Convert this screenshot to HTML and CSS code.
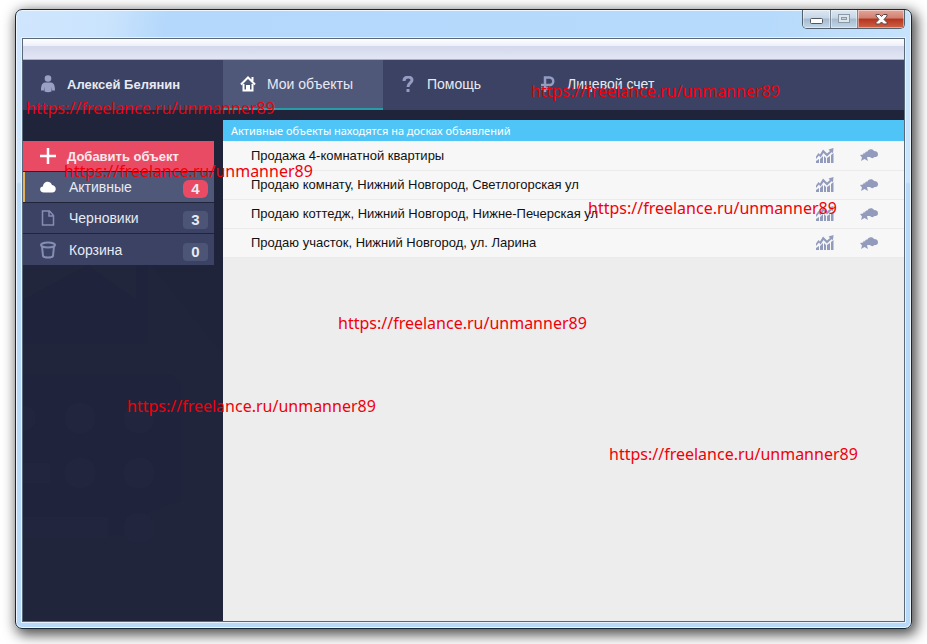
FILE: index.html
```html
<!DOCTYPE html>
<html lang="ru">
<head>
<meta charset="utf-8">
<title>Мои объекты</title>
<link rel="stylesheet" href="styles.css">
</head>
<body>
<svg class="defs" aria-hidden="true">
  <symbol id="chart" viewBox="0 0 18 15">
    <path d="M0 8.500L2.500 5 4 6.500 7 1.500 11 5.500 14 3 12.500 1.500 17.500 0 17 5 15.500 4.200 11 8.500 7.500 5 4.500 9.500 3 7.500 0 11z"/>
    <path d="M0 13l3-2v4H0zM4 11l3-3v7H4zM8 8l2 2v5H8zM11 10l3-2v7h-3zM15 7l2.500-2v10H15z"/>
  </symbol>
  <symbol id="cloudstar" viewBox="0 0 18 12">
    <path d="M5 5c0-2 1-2.500 2.500-2.500C8.500-.5 13-.5 14 2c3 0 4 1.500 4 3.500S16.500 8 14.500 8c-1 1.500-3.500 1.500-4.500 0H6z"/>
    <path d="M4 3.500l1.500 2L9 6 7 8.500 8 12 4.500 10 1 12l1-3.500L0 6l3-.5z"/>
  </symbol>
</svg>
<div class="window">
  <header class="titlebar">
    <div class="controls">
      <button class="ctl ctl-min" aria-label="Свернуть"><svg width="13" height="6"><rect x=".5" y=".5" width="12" height="5" rx="1" fill="#fff" stroke="#505861"/></svg></button>
      <button class="ctl ctl-max" aria-label="Развернуть"><svg width="12" height="10"><rect x=".5" y=".5" width="11" height="8" fill="#dce6ef" stroke="#8c9aa8"/><rect x="3.500" y="3.500" width="5" height="2" fill="#c6d3df" stroke="#8c9aa8"/></svg></button>
      <button class="ctl ctl-close" aria-label="Закрыть"><svg width="13" height="11" viewBox="0 0 13 11"><path d="M1 .5h3.500l2 2 2-2H12v1.500L9 5.500l3 3V10H8.500l-2-2-2 2H1V8.500l3-3-3-3.500z" fill="#fff" stroke="#5d4848"/></svg></button>
    </div>
  </header>
  <div class="client">
    <div class="toolbar"></div>
    <nav class="nav">
      <a class="user" href="#"><svg width="16" height="18" viewBox="0 0 16 18" fill="#99a0c4"><circle cx="8" cy="3.500" r="3.300"/><path d="M5 7.500h6c3 .5 4 3 4 8h-3l-.5-4v5c-2 1-5 1-7 0v-5l-.5 4H1c0-5 1-7.500 4-8z"/></svg>Алексей Белянин</a>
      <a class="tab active" href="#"><svg width="16" height="16" viewBox="0 0 16 16"><path d="M1 8.500l7-7 7 7M12.500 1v4" fill="none" stroke="#fff" stroke-width="2"/><path d="M3.500 8v6.500h9V8" fill="none" stroke="#fff" stroke-width="2"/><path d="M6 9h4v6H6z" fill="#fff"/></svg>Мои объекты</a>
      <a class="tab help" href="#"><svg width="16" height="16" viewBox="0 0 16 16"><path d="M4 5c0-5 8-5 8-1 0 3-4 3-4 7M8 13v3" fill="none" stroke="#949cc2" stroke-width="3"/></svg>Помощь</a>
      <a class="tab" href="#"><svg width="16" height="16" viewBox="0 0 16 16"><path d="M5 16V1.500h4.500c5 0 5 7.500 0 7.500H1M1 12.500h8" fill="none" stroke="#949cc2" stroke-width="2.500"/></svg>Лицевой счет</a>
    </nav>
    <div class="main">
      <aside class="sidebar">
        <svg class="pattern" width="200" height="360" viewBox="0 0 200 360" aria-hidden="true">
          <path d="M125 0l75 95v265H0V84h125z" fill="#20253c"/>
          <path d="M0 84V40L65 3l48 37V0h12v84z" fill="#1f233b"/>
          <path d="M0 40V0h113v40L65 5z" fill="#21263d"/>
          <path d="M0 115h145c9 0 13 6 13 14v112c-25 8-44 10-50 34H0z" fill="#1f233b"/>
          <g fill="#21263e"><circle cx="0" cy="158" r="13"/><rect x="42" y="143" width="30" height="30" rx="12"/><rect x="101" y="143" width="30" height="30" rx="12"/><rect x="0" y="203" width="27" height="20"/><rect x="42" y="198" width="30" height="30" rx="12"/><rect x="101" y="198" width="30" height="30" rx="12"/><rect x="0" y="257" width="85" height="21"/><rect x="101" y="253" width="30" height="30" rx="12"/></g>
        </svg>
        <button class="add"><svg width="16" height="16"><path d="M8 0v16M0 8h16" stroke="#fff" stroke-width="2.500"/></svg>Добавить объект</button>
        <a class="item current" href="#"><svg width="16" height="16" viewBox="0 0 16 16"><path d="M4 13.500c-5 0-5-6-1-6 0-5 7-7 9-1.500 5 .5 5 7.500 0 7.500z" fill="#fff"/></svg>Активные<span class="badge hot">4</span></a>
        <a class="item" href="#"><svg width="16" height="16" viewBox="0 0 16 16" fill="none" stroke="#858db4" stroke-width="1.500"><path d="M2.500 1h7l4 4.500v9.500h-11zM9 1v5h4.500"/></svg>Черновики<span class="badge">3</span></a>
        <a class="item" href="#"><svg width="16" height="18" viewBox="0 0 16 18" fill="none" stroke="#858db4" stroke-width="2"><ellipse cx="8" cy="4" rx="7" ry="2.500"/><path d="M2 5l1 10c1 2 9 2 10 0l1-10"/></svg>Корзина<span class="badge">0</span></a>
      </aside>
      <main class="content">
        <h1 class="caption">Активные объекты находятся на досках объявлений</h1>
        <table class="list">
          <tr><td>Продажа 4-комнатной квартиры</td><td class="act"><svg width="18" height="15"><use href="#chart"/></svg></td><td class="act"><svg width="18" height="12"><use href="#cloudstar"/></svg></td></tr>
          <tr><td>Продаю комнату, Нижний Новгород, Светлогорская ул</td><td class="act"><svg width="18" height="15"><use href="#chart"/></svg></td><td class="act"><svg width="18" height="12"><use href="#cloudstar"/></svg></td></tr>
          <tr><td>Продаю коттедж, Нижний Новгород, Нижне-Печерская ул</td><td class="act"><svg width="18" height="15"><use href="#chart"/></svg></td><td class="act"><svg width="18" height="12"><use href="#cloudstar"/></svg></td></tr>
          <tr><td>Продаю участок, Нижний Новгород, ул. Ларина</td><td class="act"><svg width="18" height="15"><use href="#chart"/></svg></td><td class="act"><svg width="18" height="12"><use href="#cloudstar"/></svg></td></tr>
        </table>
      </main>
    </div>
  </div>
</div>
<span class="mark m1">https://freelance.ru/unmanner89</span>
<span class="mark m2">https://freelance.ru/unmanner89</span>
<span class="mark m3">https://freelance.ru/unmanner89</span>
<span class="mark m4">https://freelance.ru/unmanner89</span>
<span class="mark m5">https://freelance.ru/unmanner89</span>
<span class="mark m6">https://freelance.ru/unmanner89</span>
<span class="mark m7">https://freelance.ru/unmanner89</span>
</body>
</html>
```
FILE: styles.css
```css
* { box-sizing: border-box; }
body {
  margin: 0;
  padding: 9px 15px 15px;
  min-height: 100vh;
  display: flex;
  position: relative;
  overflow: hidden;
  background: #fff;
  font-family: "Liberation Sans", Arial, sans-serif;
  font-size: 14px;
}
a { color: inherit; text-decoration: none; }
button { font: inherit; border: 0; padding: 0; }
svg { display: block; flex: none; }
.defs { position: absolute; width: 0; height: 0; }

.window {
  flex: 1;
  display: flex;
  flex-direction: column;
  padding: 0 6px 6px;
  border: 1px solid #1b2733;
  border-radius: 7px;
  background: linear-gradient(#d2e8fd00 172px, #b9d9f8 174px), linear-gradient(100deg, #cfe6fd 0, #cbe4fd 90px, #b4d8fb 150px, #b6dafb 75%, #d3e9fe 100%);
  box-shadow: inset 0 0 0 1px #eef7ff, 3px 4px 13px 2px #000000b0;
}
.titlebar { height: 28px; display: flex; justify-content: flex-end; }
.controls {
  display: flex;
  height: 19px;
  border: 1px solid #53606e;
  border-top: 0;
  border-radius: 0 0 5px 5px;
  overflow: hidden;
}
.ctl {
  width: 28px;
  display: flex;
  align-items: center;
  justify-content: center;
  background: linear-gradient(#dce7f2 0, #c7d6e5 45%, #a6bacf 50%, #c3d7e9 100%);
  box-shadow: inset 0 0 0 1px #ffffff70;
  border-right: 1px solid #7a8795;
}
.ctl-min { padding-top: 4px; }
.ctl-max { width: 27px; }
.ctl-close { width: 46px; border: 0; background: linear-gradient(#e3a599 0, #d08070 45%, #b4341f 50%, #cf6247 100%); }

.client {
  flex: 1;
  display: flex;
  flex-direction: column;
  border: 1px solid #596979;
  box-shadow: 0 0 0 1px #e6f3ff;
}
.toolbar {
  height: 21px;
  background: linear-gradient(#fff 0, #eceffa 7px, #d3d8eb 7px, #e2e6f4 20px, #a9b0cb 20px);
}
.nav { display: flex; height: 50px; background: #3b4263; color: #e8eaf3; }
.nav a { display: flex; align-items: center; padding: 0 17px 2px; }
.nav .user { width: 200px; gap: 11px; font-size: 13px; font-weight: bold; }
.tab { gap: 11px; }
.nav .active { width: 160px; background: linear-gradient(#50587a 48px, #259ca8 48px); }
.help { width: 140px; }

.main { flex: 1; display: flex; background: #1f243b; }
.sidebar { position: relative; width: 200px; padding: 31px 9px 0 0; display: flex; flex-direction: column; gap: 1px; color: #e8eaf3; }
.pattern { position: absolute; left: 0; top: 150px; }
.add, .item { position: relative; display: flex; align-items: center; height: 30px; padding: 0 6px 0 17px; }
.add { gap: 11px; background: #e94b65; color: #fbe9ec; font-size: 13px; font-weight: bold; }
.item { gap: 13px; background: #3b4263; }
.item:last-child { height: 31px; }
.item.current { background: #50587a; box-shadow: inset 2px 0 #e6b25c; }
.badge { margin: 4px 0 0 auto; width: 25px; height: 18px; border-radius: 4px; background: #4d5577; font-size: 15px; line-height: 18px; font-weight: bold; text-align: center; }
.hot { background: #e94b65; border-radius: 6px; }

.content { flex: 1; min-width: 0; margin-top: 10px; background: #ededed; }
.caption { margin: 0; padding: 0 8px; height: 21px; background: #4fc4f7; color: #fff; font: 11px/21px "Noto Sans", sans-serif; }
.list { width: 100%; border-collapse: collapse; table-layout: fixed; background: #f7f7f7; color: #111; font-size: 13px; }
.list td { height: 29px; padding: 0 0 0 28px; border-bottom: 1px solid #ebebeb; }
.list .act { width: 44px; padding: 0; }
.list td:last-child { width: 44px; }
.act svg { fill: #939bbd; }

.mark { position: absolute; color: #f00008; font: 16px/24px "Noto Sans", sans-serif; white-space: nowrap; }
.m1 { left: 26px; top: 96px; }
.m2 { left: 531px; top: 79px; }
.m3 { left: 64px; top: 159px; }
.m4 { left: 588px; top: 196px; }
.m5 { left: 338px; top: 311px; }
.m6 { left: 127px; top: 394px; }
.m7 { left: 609px; top: 442px; }
```
